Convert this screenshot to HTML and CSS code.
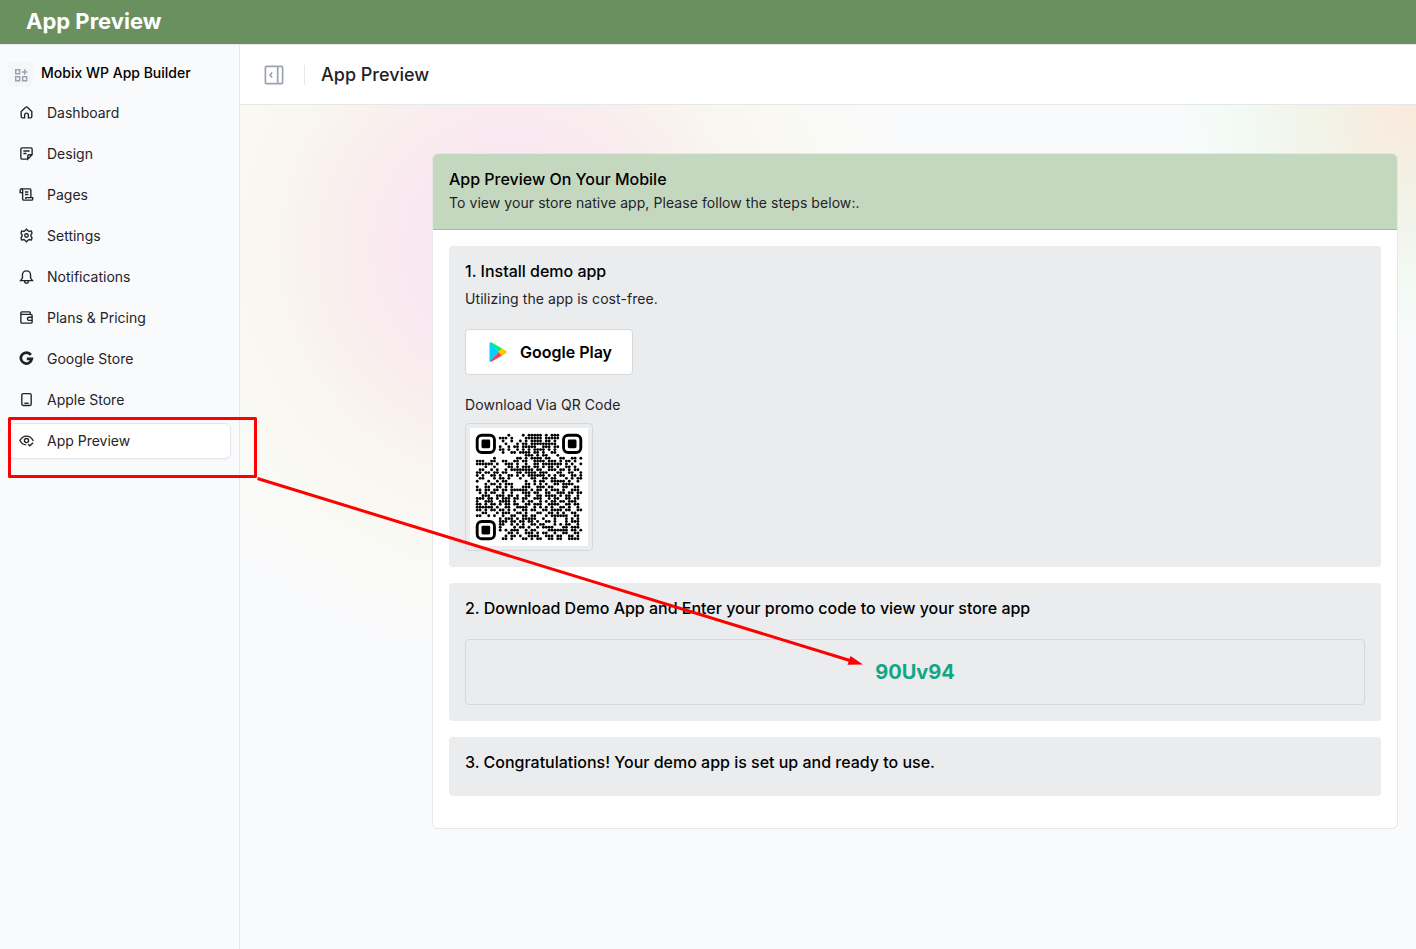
FILE: index.html
```html
<!DOCTYPE html>
<html lang="en">
  <head>
    <meta charset="UTF-8" />
    <meta name="viewport" content="width=device-width, initial-scale=1.0" />
    <title>App Preview</title>
    <link rel="stylesheet" href="styles.css">
  </head>
  <body>
    <header class="banner">
      <h1>App Preview</h1>
    </header>

    <div class="layout">
      <aside class="sidebar">
        <div class="brand">
          <span class="brand-icon">
            <svg viewBox="0 0 24 24" width="16" height="16"><path d="M4 4h6v6h-6zM4 14.500h6v6h-6zM14.500 14.500h6v6h-6zM17.500 3.500v8M13.500 7.500h8" /></svg>
          </span>
          <span class="brand-name">Mobix WP App Builder</span>
        </div>
        <nav class="menu">
          <a class="menu-item">
            <svg viewBox="0 0 24 24"><path d="M9 20.500H5.500a2 2 0 0 1-2-2V10.500L10.700 3.500a2 2 0 0 1 2.600 0L20.500 10.500v8a2 2 0 0 1-2 2H15v-4.500a3 3 0 0 0-6 0z" /></svg>
            <span>Dashboard</span>
          </a>
          <a class="menu-item">
            <svg viewBox="0 0 24 24"><path d="M14 21H5a2 2 0 0 1-2-2V5a2 2 0 0 1 2-2h14a2 2 0 0 1 2 2v9l-7 7v-5a2 2 0 0 1 2-2h5M7 8h10M7 12h5" /></svg>
            <span>Design</span>
          </a>
          <a class="menu-item">
            <svg viewBox="0 0 24 24"><path d="M5 9H1.800V5a2 2 0 0 1 4 0v14a2 2 0 0 0 2 2H20a2 2 0 0 0 2-2v-2H11v2M4 3h13a2 2 0 0 1 2 2v12M9.500 8h5.500M9.500 12h5.500" /></svg>
            <span>Pages</span>
          </a>
          <a class="menu-item">
            <svg viewBox="0 0 24 24"><path d="M9.500 4.500 12 2l2.500 2.500 1.700 1 3.600-.8 1 3.500L19 11v2l1.800 2.800-1 3.500-3.600-.8-1.700 1L12 22l-2.500-2.500-1.700-1-3.600.8-1-3.500L5 13v-2L3.200 8.200l1-3.500 3.600.8z" /><circle cx="12" cy="12" r="2.800" /></svg>
            <span>Settings</span>
          </a>
          <a class="menu-item">
            <svg viewBox="0 0 24 24"><path d="M2.500 18.500h19L18.500 14.500V9.500a6.500 6.500 0 0 0-13 0v5zM9 19.500a3 3 0 0 0 6 0" /></svg>
            <span>Notifications</span>
          </a>
          <a class="menu-item">
            <svg viewBox="0 0 24 24"><path d="M18 7V4.500a1.500 1.500 0 0 0-1.500-1.500H4.500A1.500 1.500 0 0 0 3 4.500V19a2 2 0 0 0 2 2h14a2 2 0 0 0 2-2V9a2 2 0 0 0-2-2H4M21 11.500h-5a2.500 2.500 0 0 0 0 5h5z" /></svg>
            <span>Plans &amp; Pricing</span>
          </a>
          <a class="menu-item">
            <svg class="google" viewBox="0 0 24 24"><path d="M19 6.200A8.800 8.800 0 1 0 20.500 12.500h-8" /></svg>
            <span>Google Store</span>
          </a>
          <a class="menu-item">
            <svg viewBox="0 0 24 24"><rect x="4.500" y="2.500" width="15" height="19" rx="2.500" /><path d="M8.500 18h7" /></svg>
            <span>Apple Store</span>
          </a>
          <a class="menu-item active">
            <svg viewBox="0 0 24 24"><path d="M11.500 19C7 18.800 3.600 16 1.500 12 3.800 7.500 7.500 5 12 5s8.200 2.500 10.500 7l-.4.800M14.500 18l2.800 2.500L22.500 15.500" /><circle cx="12" cy="12" r="3.300" /></svg>
            <span>App Preview</span>
          </a>
        </nav>
      </aside>

      <main class="main">
        <div class="topbar">
          <svg class="toggle" viewBox="0 0 20 20" width="20" height="20"><rect x="1.400" y="1.400" width="17.200" height="17.200" rx="1" /><path d="M13.700 1.500v17M8.200 7.500 6 10l2.200 2.500" /></svg>
          <h2>App Preview</h2>
        </div>

        <div class="content">
          <section class="card">
            <div class="card-header">
              <h3>App Preview On Your Mobile</h3>
              <p>To view your store native app, Please follow the steps below:.</p>
            </div>
            <div class="card-body">
              <div class="step step-install">
                <h3>1. Install demo app</h3>
                <p>Utilizing the app is cost-free.</p>
                <button type="button" class="play-button">
                  <svg viewBox="0 0 18 20" width="18" height="20">
                    <path fill="#00d0ff" d="M1.200.3Q.5.500.500 1.500v17q0 1 .7 1.200L10 10z" />
                    <path fill="#00f076" d="M1 .4Q1.700-.1 2.800.6L13 6.400 9.900 10z" />
                    <path fill="#ff3a44" d="M1 19.600q.7.500 1.800-.2L13 13.600 9.900 10z" />
                    <path fill="#ffc900" d="M12.800 6.300 17 8.800q1.300 1.200 0 2.400l-4.200 2.500L9.400 10z" />
                  </svg>
                  <span>Google Play</span>
                </button>
                <p class="qr-label">Download Via QR Code</p>
                <div class="qr-box">
                  <svg id="qr" viewBox="-2 -2 41 41" width="118" height="118"></svg>
                </div>
              </div>

              <div class="step step-code">
                <h3>2. Download Demo App and Enter your promo code to view your store app</h3>
                <div class="promo-code">90Uv94</div>
              </div>

              <div class="step step-done">
                <h3>3. Congratulations! Your demo app is set up and ready to use.</h3>
              </div>
            </div>
          </section>
        </div>
      </main>
    </div>

    <!-- Highlight of the menu entry, with an arrow to the promo code -->
    <svg class="callout" viewBox="0 0 1416 949" width="1416" height="949">
      <rect x="9.500" y="418.500" width="246" height="58" />
      <path d="M257.500 478.500 850 660.500" />
      <polygon points="863,664.500 847.500,664.800 850.500,656" />
    </svg>

    <script>
      const qrRows = [
        "...........#....#.#####.#.###........",
        "........###.#....######.#####........",
        ".........#..#..#.#.####.##.#.........",
        "..........#...#.##.#########.........",
        "........#..#.##.#####..###.##........",
        "........##.#..#.#.#.####.#.#.........",
        ".........#..##.####.##.#..##.........",
        ".................###.#.##...#........",
        "......#.......##.#.####.##...##..##.#",
        "###..##..##..##.##..####.###.#.##.#..",
        "######.#..###.#..#..##.#######.#.#..#",
        "...#..#....##.#.###.##.#.##.#..##.#..",
        ".##..#.#..#.########.##..###.##.#.##.",
        "##.##.##.##...##.####.###...##..##..#",
        "#.#..##.#..##.#.#.######.#.#.##..##.#",
        ".##...#.##.#...#...##..##.##...#.#.##",
        "#...#..#.##......#..#.##..#####.#..#.",
        "...#.##.#.###....##.#.#.#..##.####...",
        "#..##..##.#.#...###..###.##...##..##.",
        "##.##.##.##.######.#.##.#.###.#..###.",
        ".#.#.##..#..#...###.##..##..###.##.##",
        "..###..###.##.#..##..##.####.#.##..#.",
        "###.##.#.###.##.##..###..#.##..##.##.",
        "#..###..####.#..#.##..#.#.##.##.###..",
        "##.#.##.#.##.##..##.###..####..##.##.",
        "######.#..##..####..#.#.#.#..##.#..#.",
        "##.#.##.##.#.#..##.##..##.####.##..##",
        "..##...#.###..##.#...##..##.#.#..##..",
        "##..#.#..#..##..##.##...#.######..##.",
        "........#.###.#.#####..#...#...#.#.#.",
        "........###.##.##.##.#..##.#...#.###.",
        "........##..#.#.#..##.##...#.#.##..#.",
        "........#....#.##.#..#.####...##.###.",
        "........#.#.###..#.##....#######.##.#",
        "...........##.#..###.#.##..#..##..##.",
        "..........#.##.#..####..###.##..##.#.",
        ".........##.#...##.#.##..##.##..####.",
      ];

      let shapes = '<rect class="paper" x="-2" y="-2" width="41" height="41" />';

      // Corner finder marks
      [[0, 0], [30, 0], [0, 30]].forEach(([x, y]) => {
        shapes += `<rect class="ring" x="${x + 0.5}" y="${y + 0.5}" width="6" height="6" rx="1.6" />`;
        shapes += `<rect x="${x + 2}" y="${y + 2}" width="3" height="3" rx="0.5" />`;
      });

      qrRows.forEach((row, y) => {
        [...row].forEach((cell, x) => {
          if (cell === "#") {
            shapes += `<circle cx="${x + 0.5}" cy="${y + 0.5}" r="0.5" />`;
          }
        });
      });
      document.getElementById("qr").innerHTML = shapes;
    </script>
  </body>
</html>
```
FILE: styles.css
```css
* {
  box-sizing: border-box;
}
body {
  margin: 0;
  height: 949px;
  overflow: hidden;
  position: relative;
  display: flex;
  flex-direction: column;
  font-family: Inter, "Liberation Sans", sans-serif;
  font-size: 14px;
  color: #1f2328;
  background-color: #f9fafc;
}
h1,
h2,
h3,
p {
  margin: 0;
}
svg {
  display: block;
  flex-shrink: 0;
}
.banner {
  height: 44px;
  padding-left: 26px;
  background-color: #6a9060;
  color: white;
}
.banner h1 {
  font-size: 22px;
  line-height: 43px;
  font-weight: 700;
}
.layout {
  flex: 1;
  display: flex;
  border-top: 1px solid #e5e7eb;
}
.sidebar {
  width: 240px;
  padding: 17px 8px 0;
  border-right: 1px solid #e5e7eb;
}
.brand {
  display: flex;
  align-items: center;
  height: 25px;
  margin-bottom: 8px;
}
.brand-icon {
  padding: 5px 4px 4px 5px;
  margin-right: 8px;
  border-radius: 4px;
  background-color: #f5f6f8;
}
.brand-icon svg {
  fill: none;
  stroke: #9ca3af;
  stroke-width: 2.2;
}
.brand-name {
  color: #000;
  font-weight: 500;
  line-height: 20px;
  margin-bottom: 3px;
}
.menu {
  display: flex;
  flex-direction: column;
  gap: 5px;
}
.menu-item {
  display: flex;
  align-items: center;
  gap: 13px;
  height: 36px;
  padding: 0 0 1px 10px;
  border: 1px solid transparent;
  border-radius: 6px;
}
.menu-item svg {
  width: 15px;
  height: 15px;
  fill: none;
  stroke: #1f2328;
  stroke-width: 2.2;
}
.menu-item .google {
  stroke-width: 4.4;
}
.menu-item.active {
  background-color: #fff;
  border-color: #e5e7eb;
  box-shadow: 0 1px 2px rgba(0, 0, 0, 0.05);
}
.menu-item span {
  line-height: 16px;
}
.main {
  flex: 1;
  display: flex;
  flex-direction: column;
}
.topbar {
  height: 60px;
  padding-left: 24px;
  display: flex;
  align-items: center;
  background-color: #fff;
  border-bottom: 1px solid #e5e7eb;
}
.toggle {
  fill: none;
  stroke: #9ca3af;
  stroke-width: 1.7;
}
.topbar h2 {
  margin-left: 20px;
  padding-left: 16px;
  border-left: 1px solid #e5e7eb;
  font-size: 18px;
  line-height: 20px;
  font-weight: 500;
}
.content {
  flex: 1;
  padding: 48px 18px 0 192px;
  background:
    radial-gradient(circle at 270px 145px, #fae4f3 0, #f9e6f2 80px, #f9ebef 140px, #f9f0ee 185px, #f9f6f1 240px, #f9f9f4 310px, rgba(249, 250, 252, 0) 410px) no-repeat,
    radial-gradient(ellipse 270px 270px at 1172px 4px, #faeadd 0, #f8ece0 12%, #f3f1e4 27%, #f2f5ec 45%, #f3faf5 66%, #f9fafc 90%) no-repeat,
    #f9fafc;
}
.card {
  height: 676px;
  border: 1px solid #e5e7eb;
  border-radius: 6px;
  background-color: #fff;
  overflow: hidden;
}
.card h3 {
  font-size: 16px;
  line-height: 24px;
  font-weight: 500;
  letter-spacing: -0.01px;
  color: #000;
}
.card-header {
  height: 76px;
  padding: 13px 16px;
  background-color: #c4d8bf;
  border-bottom: 1px solid #9cbfa5;
}
.card-header p {
  line-height: 24px;
  letter-spacing: 0.065px;
}
.card-body {
  display: flex;
  flex-direction: column;
  gap: 16px;
  padding: 16px;
}
.step {
  padding: 13px 16px;
  border-radius: 4px;
  background-color: #ebecee;
}
.step-install {
  height: 321px;
}
.step-install p {
  margin-top: 6px;
  line-height: 20px;
  letter-spacing: 0.065px;
}
.play-button {
  display: flex;
  align-items: center;
  gap: 13px;
  width: 168px;
  height: 46px;
  margin: 20px 0;
  padding: 0 0 0 23px;
  border: 1px solid #d5d7da;
  border-radius: 4px;
  background-color: #fff;
  color: #000;
  font: 600 16px Inter, sans-serif;
}
.step-install .qr-label {
  margin: 0 0 8px;
}
.qr-box {
  width: 128px;
  height: 128px;
  padding: 4px;
  border: 1px solid #d5d7da;
  border-radius: 4px;
}
.qr-box .paper {
  fill: #fff;
}
.qr-box .ring {
  fill: none;
  stroke: #000;
  stroke-width: 1;
}
.step-code {
  height: 138px;
}
.promo-code {
  height: 66px;
  margin-top: 19px;
  border: 1px solid #d5d7da;
  border-radius: 4px;
  color: #12a784;
  font-size: 20px;
  font-weight: 700;
  line-height: 64px;
  text-align: center;
}
.step-done {
  height: 59px;
}
.callout {
  position: absolute;
  top: 0;
  left: 0;
  pointer-events: none;
  fill: none;
  stroke: #f00;
  stroke-width: 3;
  stroke-linejoin: round;
}
.callout polygon {
  fill: #f00;
  stroke: none;
}
```
